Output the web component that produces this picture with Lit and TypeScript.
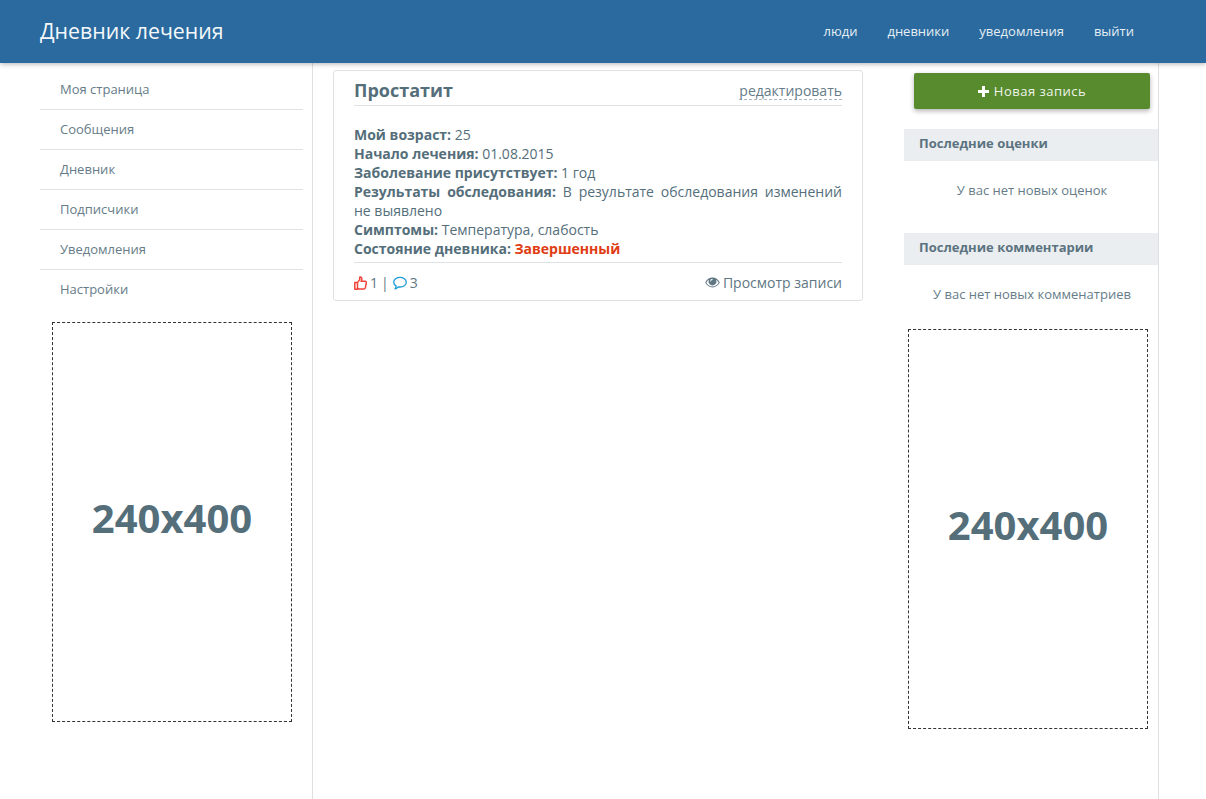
import { LitElement, html, css } from "lit";
import { customElement } from "lit/decorators.js";

@customElement("app-root")
export class AppRoot extends LitElement {
  static styles = css`
    :host { display: block; height: 799px; overflow: hidden; position: relative; font-family: "Open Sans", sans-serif; font-size: 14px; color: #546e7a; background: #fff; }
    * { box-sizing: border-box; }
    .top { height: 63px; background: #2a6a9e; box-shadow: 0 1px 5px rgba(0,0,0,.3); position: relative; z-index: 2; display: flex; align-items: center; justify-content: space-between; padding: 0 72px 2px 40px; color: #fff; }
    .brand { font-size: 21.3px; line-height: 28px; color: #f4f8fb; }
    .top nav { display: flex; gap: 30px; font-size: 13px; color: #e6eef5; }
    .cols { display: grid; grid-template-columns: 313px 591px 255px; height: 736px; }
    .left { border-right: 1px solid #dde0e2; padding: 7px 9px 0 40px; }
    .menu { margin: 0; padding: 0; list-style: none; font-size: 13px; }
    .menu li { height: 40px; line-height: 38px; padding-left: 20px; border-bottom: 1px solid #e0e3e5; color: #667c88; }
    .menu li:last-child { border-bottom: 0; }
    .ad { width: 240px; height: 400px; border: 1px dashed #333; display: flex; align-items: center; justify-content: center; padding-bottom: 10px; font-size: 40px; font-weight: 700; color: #546e7a; }
    .left .ad { margin: 12px 0 0 12px; }
    .center { padding: 7px 0 0 20px; }
    .card { width: 530px; height: 231px; border: 1px solid #dfe2e4; border-radius: 3px; padding: 0 20px; }
    .head { display: flex; justify-content: space-between; align-items: center; height: 35px; padding-top: 5px; border-bottom: 1px solid #dfe2e4; }
    .head h2 { margin: -2px 0 0; font-size: 18px; font-weight: 700; line-height: 24px; color: #546e7a; }
    .edit { font-size: 14px; line-height: 17px; color: #667c88; border-bottom: 1px dashed #a9b8c1; }
    .body { padding-top: 19px; line-height: 19px; padding-bottom: 4px; border-bottom: 1px solid #dfe2e4; text-align: justify; }
    .body b { font-weight: 700; color: #546e7a; }
    .body .end { color: #e03c14; }
    .foot { display: flex; justify-content: space-between; align-items: center; height: 39px; color: #5f7783; }
    .foot span { display: inline-flex; align-items: center; gap: 3px; }
    .foot svg { display: block; }
    .foot .sep { margin: 0 1px 0 0; }
    .right { border-right: 1px solid #dde0e2; }
    .btn { margin: 10px 8px 0 10px; height: 36px; background: #578b2e; border-radius: 2px; box-shadow: 0 2px 5px rgba(0,0,0,.3); color: #eef3ea; font-size: 13px; letter-spacing: .5px; display: flex; align-items: center; justify-content: center; gap: 5px; }
    .sec { height: 32px; margin-top: 20px; background: #ebeef0; padding-left: 15px; font-size: 13px; font-weight: 700; line-height: 29px; color: #5b7380; }
    .none { height: 52px; font-size: 13px; text-align: center; padding: 19px 0 0 3px; margin-right: 1px; line-height: 20px; color: #667c88; margin-bottom: 20px; }
    .none.last { margin-bottom: 0; height: 64px; }
    .right .ad { margin-left: 4px; }
  `;

  render() {
    const menu = ["Моя страница", "Сообщения", "Дневник", "Подписчики", "Уведомления", "Настройки"];
    return html`
      <header class="top">
        <div class="brand">Дневник лечения</div>
        <nav><span>люди</span><span>дневники</span><span>уведомления</span><span>выйти</span></nav>
      </header>
      <div class="cols">
        <aside class="left">
          <ul class="menu">${menu.map((m) => html`<li>${m}</li>`)}</ul>
          <div class="ad">240x400</div>
        </aside>
        <main class="center">
          <article class="card">
            <div class="head"><h2>Простатит</h2><span class="edit">редактировать</span></div>
            <div class="body">
              <div><b>Мой возраст:</b> 25</div>
              <div><b>Начало лечения:</b> 01.08.2015</div>
              <div><b>Заболевание присутствует:</b> 1 год</div>
              <div><b>Результаты обследования:</b> В результате обследования изменений не выявлено</div>
              <div><b>Симптомы:</b> Температура, слабость</div>
              <div><b>Состояние дневника:</b> <b class="end">Завершенный</b></div>
            </div>
            <div class="foot">
              <span>
                <svg width="13" height="14" viewBox="0 0 13 14" fill="none" stroke="#f0433a" stroke-width="1.5" stroke-linejoin="round"><path d="M.8 6.400h2.700v6.800H.8zM3.500 6.600 5.700 3.600V1.200c1.200-.5 2.100.3 2.100 1.600 0 .9-.4 1.800-.7 2.500h4c1 0 1.400.8 1.200 1.600l-1 5c-.2.8-.7 1.200-1.500 1.200H5.600c-.9 0-1.400-.6-2.100-.6"/></svg>
                1
                <span class="sep">|</span>
                <svg width="14" height="14" viewBox="0 0 14 14" fill="none" stroke="#1b9ad6" stroke-width="1.3" stroke-linejoin="round"><path d="M7 1.300c3.200 0 6.300 2 6.300 4.900S10.300 11 7 11c-.6 0-1.100 0-1.700-.2C4.500 11.800 3.300 12.600 2 12.900c.6-.9 1.100-1.800 1.100-3C1.500 9 .7 7.700.7 6.200.7 3.300 3.800 1.300 7 1.300z"/></svg>
                3
              </span>
              <span>
                <svg width="15" height="11" viewBox="0 0 15 11" fill="#5f7783"><path d="M7.500.6C4.400.6 1.800 2.500.2 5.500c1.600 3 4.200 4.900 7.300 4.900s5.700-1.900 7.300-4.900C13.200 2.500 10.600.6 7.500.6zM7.500 9.500c-2.600 0-4.800-1.500-6.200-4 .8-1.300 1.700-2.300 2.900-3-.4.600-.7 1.300-.7 2.100 0 2.100 1.800 3.900 4 3.900s4-1.800 4-3.900c0-.8-.3-1.500-.7-2.100 1.200.7 2.100 1.700 2.900 3-1.400 2.500-3.600 4-6.200 4zM6 2.300c.9-.5 1.700-.2 1.700.1S6.700 3 6.300 3.500 6 4.800 5.700 4.800 5 3 6 2.300z"/></svg>
                Просмотр записи
              </span>
            </div>
          </article>
        </main>
        <aside class="right">
          <div class="btn">
            <svg width="11" height="11" viewBox="0 0 11 11" fill="#fff"><path d="M4 0h3v4h4v3H7v4H4V7H0V4h4z"/></svg>
            Новая запись
          </div>
          <div class="sec">Последние оценки</div>
          <div class="none">У вас нет новых оценок</div>
          <div class="sec">Последние комментарии</div>
          <div class="none last">У вас нет новых комменатриев</div>
          <div class="ad">240x400</div>
        </aside>
      </div>
    `;
  }
}
